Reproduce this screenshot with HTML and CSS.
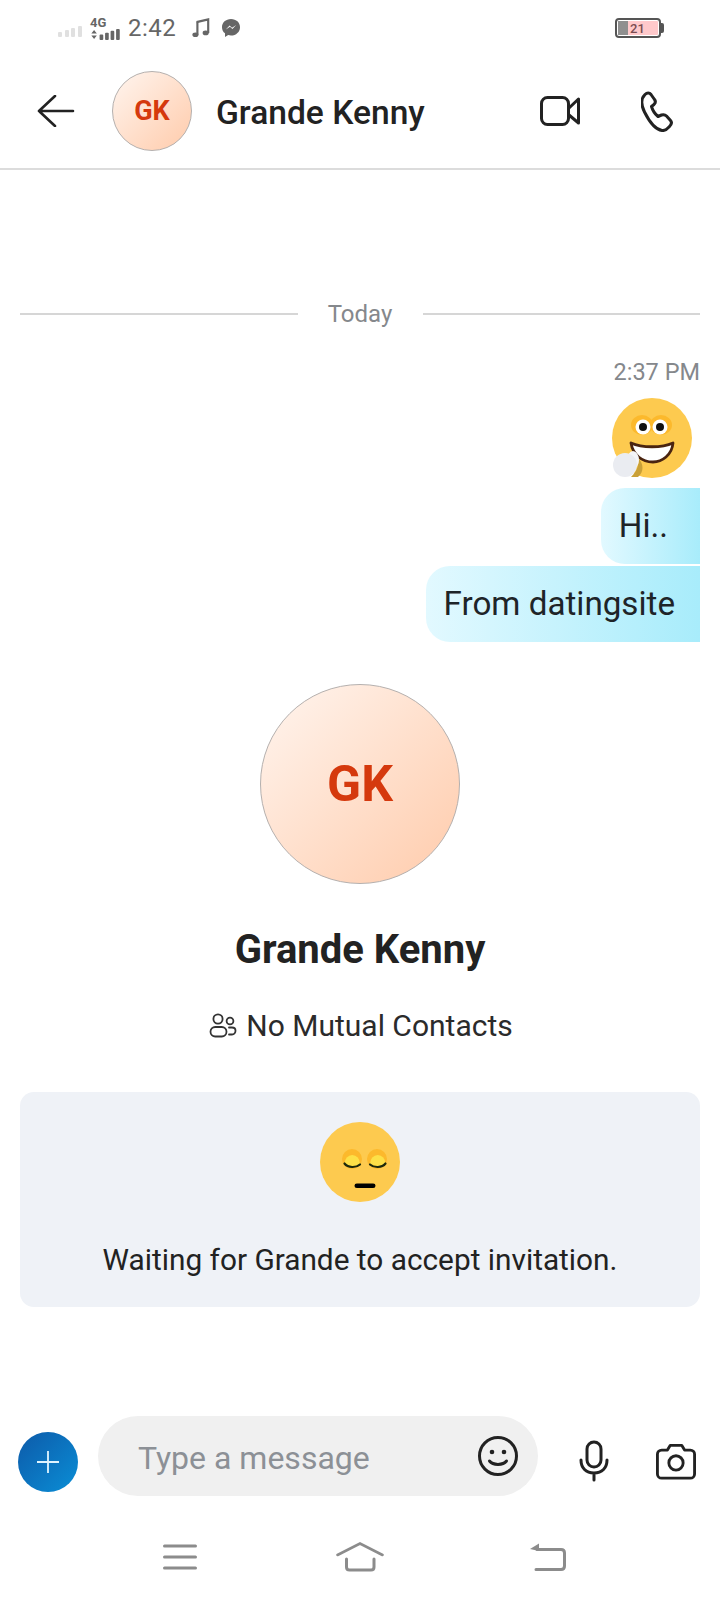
FILE: index.html
```html
<!DOCTYPE html>
<html lang="en">

<head>
    <meta charset="UTF-8">
    <title>Grande Kenny</title>
    <link rel="stylesheet" href="styles.css">
</head>

<body>
    <div class="status-bar">
        <svg class="signal" width="24" height="12" viewBox="0 0 24 12">
            <rect x="0" y="7" width="4" height="5" rx="1"></rect>
            <rect x="7" y="5" width="4" height="7" rx="1"></rect>
            <rect x="13" y="3" width="4" height="9" rx="1"></rect>
            <rect x="20" y="1" width="4" height="11" rx="1"></rect>
        </svg>
        <div class="network">
            <span class="network-type">4G</span>
            <svg width="32" height="11" viewBox="0 0 32 12">
                <path d="M0 5 L3 1 L6 5Z M0 7 L6 7 L3 11Z"></path>
                <rect x="9" y="6" width="4" height="6" rx="1"></rect>
                <rect x="15" y="4" width="4" height="8" rx="1"></rect>
                <rect x="21" y="2" width="4" height="10" rx="1"></rect>
                <rect x="27" y="0" width="4" height="12" rx="1"></rect>
            </svg>
        </div>
        <span class="clock">2:42</span>
        <svg class="music" width="18" height="20" viewBox="0 0 20 21">
            <path d="M5 4 L18 1 V16" fill="none" stroke="#666" stroke-width="2.4"></path>
            <path d="M6 4 V18" fill="none" stroke="#666" stroke-width="2.4"></path>
            <ellipse cx="3.8" cy="18" rx="3.4" ry="2.6" fill="#666"></ellipse>
            <ellipse cx="15.2" cy="16" rx="3.4" ry="2.6" fill="#666"></ellipse>
        </svg>
        <svg class="messenger" width="20" height="20" viewBox="0 0 20 20">
            <path d="M10 1 C4.8 1 1 4.6 1 9.2 C1 11.8 2.1 13.9 4 15.3 V19 L7.2 17.1 C8.1 17.4 9 17.5 10 17.5 C15.2 17.5 19 13.8 19 9.2 C19 4.6 15.2 1 10 1Z" fill="#666"></path>
            <path d="M4.8 11.6 L8.6 7.6 L11 9.8 L15.2 7 L11.4 11 L9 8.8Z" fill="#fff"></path>
        </svg>
        <div class="battery">
            <div class="battery-body">
                <div class="battery-level"></div>
                <span class="battery-text">21</span>
            </div>
            <div class="battery-tip"></div>
        </div>
    </div>

    <div class="header">
        <svg class="back-icon" width="38" height="32" viewBox="0 0 38 32">
            <path d="M36 16 H2 M18 1 L2 16 L18 31" fill="none" stroke="#222" stroke-width="2.6" stroke-linecap="round" stroke-linejoin="round"></path>
        </svg>
        <div class="avatar avatar-small">GK</div>
        <div class="header-name">Grande Kenny</div>
        <svg class="video-icon" width="40" height="30" viewBox="0 0 40 30">
            <rect x="1.5" y="1.5" width="27" height="27" rx="6" fill="none" stroke="#222" stroke-width="3"></rect>
            <path d="M29 12 L38.5 3 V27 L29 19" fill="none" stroke="#222" stroke-width="3" stroke-linejoin="round"></path>
        </svg>
        <svg class="phone-icon" width="32" height="42" viewBox="0 0 32 42">
            <path d="M4 4.5 C6 2.6 8.5 2.5 10 4.5 L13.5 9.5 C15 11.5 14.5 13 13 14.5 L10.5 16.5 C11.5 20 14 24 17 26.5 L20.5 25 C22.5 24.3 24 24.5 25.5 26 L29.5 30.5 C31.2 32.5 30.5 34.5 28.5 36.5 C27 38.2 24 41 21 40.5 C14 39.5 7.5 30 3.5 22 C0.5 16 -0.5 9 4 4.5Z" fill="none" stroke="#222" stroke-width="3" stroke-linejoin="round"></path>
        </svg>
    </div>

    <div class="chat">
        <div class="day-row">
            <div class="day-line"></div>
            <span class="day-text">Today</span>
            <div class="day-line"></div>
        </div>

        <div class="msg-time">2:37 PM</div>

        <div class="msg-emoji">
            <svg width="80" height="80" viewBox="0 0 80 80">
                <circle cx="40" cy="40" r="40" fill="#fdca4f"></circle>
                <ellipse cx="30" cy="27" rx="11" ry="10" fill="#fcb92c"></ellipse>
                <ellipse cx="49" cy="27" rx="11" ry="10" fill="#fcb92c"></ellipse>
                <circle cx="31" cy="29" r="7.5" fill="#fff"></circle>
                <circle cx="48" cy="29" r="7.5" fill="#fff"></circle>
                <circle cx="31" cy="29" r="4" fill="#111"></circle>
                <circle cx="48" cy="29" r="4" fill="#111"></circle>
                <path d="M19 45 C30 50 50 50 61 45 C60 57 50 64 41 64 C30 64 21 57 19 45Z" fill="#fff" stroke="#4a2410" stroke-width="2.8" stroke-linejoin="round"></path>
                <path d="M26 60 C32 66 32 74 26 79 L19 79 C26 72 27 66 26 60Z" fill="#c9a038"></path>
                <ellipse cx="21" cy="62" rx="6" ry="9" fill="#f4f5f8"></ellipse>
                <ellipse cx="13" cy="67" rx="12" ry="12" fill="#eaecf1"></ellipse>
            </svg>
        </div>

        <div class="bubble bubble-short">Hi..</div>
        <div class="bubble bubble-next">From datingsite</div>

        <div class="profile">
            <div class="avatar avatar-big">GK</div>
            <div class="profile-name">Grande Kenny</div>
            <div class="mutual">
                <svg width="28" height="26" viewBox="0 0 28 26">
                    <circle cx="9" cy="6" r="4.6" fill="none" stroke="#333" stroke-width="1.8"></circle>
                    <circle cx="21" cy="8" r="3.4" fill="none" stroke="#333" stroke-width="1.8"></circle>
                    <rect x="1.5" y="14" width="16" height="9.5" rx="4.7" fill="none" stroke="#333" stroke-width="1.8"></rect>
                    <path d="M20 14.5 H23 C25 14.5 26.5 15.8 26.5 17.8 C26.5 19.8 25 21.5 23 21.5 H20" fill="none" stroke="#333" stroke-width="1.8" stroke-linecap="round"></path>
                </svg>
                <span>No Mutual Contacts</span>
            </div>
        </div>

        <div class="invite-card">
            <svg width="80" height="80" viewBox="0 0 80 80">
                <circle cx="40" cy="40" r="40" fill="#fdca4f"></circle>
                <circle cx="32" cy="37" r="10" fill="#fcb92c"></circle>
                <circle cx="57" cy="37" r="10" fill="#fcb92c"></circle>
                <path d="M24.5 42 A7.7 9 0 0 1 40 42 C36 45 29 45 24.5 42Z" fill="#fde047"></path>
                <path d="M50 42 A7.7 9 0 0 1 65.5 42 C61 45 54 45 50 42Z" fill="#fde047"></path>
                <path d="M24.5 41.5 C28 46 36 46 40 42.5" fill="none" stroke="#1d2a0c" stroke-width="2.2" stroke-linecap="round"></path>
                <path d="M50 42.5 C54 46 62 46 65.5 41.5" fill="none" stroke="#1d2a0c" stroke-width="2.2" stroke-linecap="round"></path>
                <rect x="34.5" y="61.5" width="21" height="4.6" rx="2.3" fill="#000"></rect>
            </svg>
            <div class="invite-text">Waiting for Grande to accept invitation.</div>
        </div>
    </div>

    <div class="composer">
        <div class="plus-button">
            <svg width="24" height="24" viewBox="0 0 24 24">
                <path d="M12 1 V23 M1 12 H23" stroke="#dff4ff" stroke-width="1.8"></path>
            </svg>
        </div>
        <div class="message-box">
            <span class="placeholder">Type a message</span>
            <svg width="42" height="42" viewBox="0 0 42 42">
                <circle cx="21" cy="21" r="18.5" fill="none" stroke="#222" stroke-width="3"></circle>
                <circle cx="15" cy="17" r="2.3" fill="#222"></circle>
                <circle cx="27" cy="17" r="2.3" fill="#222"></circle>
                <path d="M12.5 26 C16 30.5 26 30.5 29.5 26" fill="none" stroke="#222" stroke-width="3" stroke-linecap="round"></path>
            </svg>
        </div>
        <svg class="mic-icon" width="30" height="42" viewBox="0 0 30 42">
            <rect x="8" y="2" width="14" height="25" rx="7" fill="none" stroke="#222" stroke-width="3"></rect>
            <path d="M2 20 C2 28 7 33 15 33 C23 33 28 28 28 20 M15 33 V40" fill="none" stroke="#222" stroke-width="3" stroke-linecap="round"></path>
        </svg>
        <svg class="camera-icon" width="40" height="37" viewBox="0 0 42 38">
            <path d="M6 7 H12 L15 2 H27 L30 7 H36 C38.5 7 40.5 9 40.5 11.5 V32 C40.5 34.5 38.5 36.5 36 36.5 H6 C3.5 36.5 1.5 34.5 1.5 32 V11.5 C1.5 9 3.5 7 6 7Z" fill="none" stroke="#222" stroke-width="3" stroke-linejoin="round"></path>
            <circle cx="21" cy="20.5" r="7.5" fill="none" stroke="#222" stroke-width="3"></circle>
        </svg>
    </div>

    <div class="nav-bar">
        <svg width="34" height="26" viewBox="0 0 34 26">
            <path d="M1.5 2 H32.5 M1.5 13 H32.5 M1.5 24 H32.5" stroke="#8c8c8c" stroke-width="3" stroke-linecap="round"></path>
        </svg>
        <svg class="nav-home" width="48" height="30" viewBox="0 0 48 30">
            <path d="M1.5 13 L24 1.5 L46.5 13" fill="none" stroke="#8c8c8c" stroke-width="2.6" stroke-linecap="round"></path>
            <path d="M10.5 17 V25 C10.5 27 11.5 28 13.5 28 H35 C37 28 38 27 38 25 V17" fill="none" stroke="#8c8c8c" stroke-width="3" stroke-linecap="round"></path>
        </svg>
        <svg width="36" height="28" viewBox="0 0 36 28">
            <path d="M0 6 L9 0.5 V8Z" fill="#8c8c8c"></path>
            <path d="M7 6.5 H31 C33.5 6.5 34.5 8 34.5 10 V23 C34.5 25 33.5 26.5 31 26.5 H6" fill="none" stroke="#8c8c8c" stroke-width="3" stroke-linecap="round"></path>
        </svg>
    </div>
</body>

</html>
```

FILE: styles.css
```css
* {
    box-sizing: border-box;
}

body {
    font-family: Roboto, "Liberation Sans", sans-serif;
    background-color: white;
    color: #222;
    margin: 0;
    padding: 0;
    width: 720px;
    height: 1600px;
    overflow: hidden;
    display: flex;
    flex-direction: column;
}

/* status bar */
.status-bar {
    height: 56px;
    padding-left: 58px;
    padding-right: 56px;
    display: flex;
    align-items: center;
    color: #666;
}

.signal {
    fill: #e0e0e0;
    margin-top: 6px;
}

.network {
    display: flex;
    flex-direction: column;
    margin-left: 8px;
    fill: #666;
}

.network-type {
    font-size: 13px;
    font-weight: 700;
    line-height: 11px;
    margin-bottom: 1px;
}

.clock {
    font-size: 24px;
    margin-left: 6px;
    letter-spacing: 0.5px;
}

.music {
    margin-left: 16px;
}

.messenger {
    margin-left: 11px;
}

.battery {
    margin-left: auto;
    display: flex;
    align-items: center;
}

.battery-body {
    width: 46px;
    height: 20px;
    border: 2px solid #555;
    border-radius: 4px;
    padding: 1px;
    background: linear-gradient(#ffc9cb, #ffc9cb) content-box;
    display: flex;
    align-items: center;
}

.battery-level {
    width: 10px;
    height: 100%;
    background-color: #8f8f8f;
}

.battery-text {
    font-size: 13px;
    margin-left: 2px;
    color: #7a4d52;
    font-weight: 500;
}

.battery-tip {
    width: 3px;
    height: 10px;
    background-color: #555;
    border-radius: 0 2px 2px 0;
}

/* header */
.header {
    height: 114px;
    padding-left: 37px;
    padding-right: 47px;
    padding-bottom: 2px;
    border-bottom: 2px solid #dcdcdc;
    display: flex;
    align-items: center;
}

.avatar {
    border-radius: 50%;
    border: 1px solid #b5b0ae;
    background: linear-gradient(135deg, #fff5ef, #ffcbab);
    color: #d5390d;
    font-weight: 700;
    display: flex;
    justify-content: center;
    align-items: center;
}

.avatar-small {
    width: 80px;
    height: 80px;
    font-size: 27px;
    margin-left: 37px;
}

.header-name {
    font-size: 33.6px;
    font-weight: 500;
    margin-left: 24px;
    margin-top: 2px;
    flex: 1;
}

.phone-icon {
    margin-left: 61px;
}

/* chat area */
.chat {
    flex: 1;
    padding: 0 20px;
    display: flex;
    flex-direction: column;
}

.day-row {
    margin-top: 129px;
    display: flex;
    align-items: center;
    height: 30px;
}

.day-line {
    flex: 1;
    height: 2px;
    background-color: #d6d6d6;
}

.day-text {
    width: 125px;
    text-align: center;
    font-size: 24px;
    color: #85888c;
}

.msg-time {
    margin-top: 29px;
    text-align: right;
    font-size: 23.5px;
    line-height: 28px;
    color: #85888c;
}

.msg-emoji {
    margin-top: 12px;
    margin-right: 8px;
    align-self: flex-end;
    height: 80px;
}

.bubble {
    align-self: flex-end;
    margin-top: 10px;
    height: 76px;
    padding: 0 25px 0 18px;
    font-size: 33.2px;
    line-height: 76px;
    border-radius: 24px 0 0 24px;
    background: linear-gradient(to right, #e2f9ff, #a8ecfb);
    color: #1e2428;
}

.bubble-short {
    padding-right: 32px;
}

.bubble-next {
    margin-top: 2px;
}

.profile {
    margin-top: 42px;
    display: flex;
    flex-direction: column;
    align-items: center;
}

.avatar-big {
    width: 200px;
    height: 200px;
    font-size: 50px;
}

.profile-name {
    margin-top: 40px;
    font-size: 40px;
    font-weight: 700;
    line-height: 52px;
}

.mutual {
    margin-top: 30px;
    margin-left: 2px;
    display: flex;
    align-items: center;
    font-size: 30px;
    line-height: 40px;
    color: #2b2b2b;
}

.mutual svg {
    margin-right: 9px;
}

.invite-card {
    margin-top: 46px;
    height: 215px;
    padding-top: 30px;
    border-radius: 14px;
    background-color: #eff2f7;
    display: flex;
    flex-direction: column;
    align-items: center;
}

.invite-text {
    margin-top: 40px;
    font-size: 29.8px;
    line-height: 36px;
}

/* composer */
.composer {
    height: 80px;
    margin-bottom: 33px;
    padding-left: 18px;
    display: flex;
    align-items: center;
}

.plus-button {
    width: 60px;
    height: 60px;
    margin-top: 12px;
    border-radius: 50%;
    background: linear-gradient(135deg, #0d5aa9, #0a8ed6);
    display: flex;
    justify-content: center;
    align-items: center;
}

.message-box {
    width: 440px;
    height: 80px;
    margin-left: 20px;
    padding: 0 19px 0 40px;
    border-radius: 40px;
    background-color: #f0f0f0;
    display: flex;
    justify-content: space-between;
    align-items: center;
}

.placeholder {
    font-size: 32px;
    color: #8c9096;
    margin-top: 4px;
}

.mic-icon {
    margin-left: 41px;
    margin-top: 10px;
}

.camera-icon {
    margin-left: 47px;
    margin-top: 10px;
}

/* system navigation */
.nav-bar {
    height: 71px;
    padding: 0 154px 16px 163px;
    display: flex;
    justify-content: space-between;
    align-items: center;
}

.nav-home {
    margin-right: 8px;
}
```
